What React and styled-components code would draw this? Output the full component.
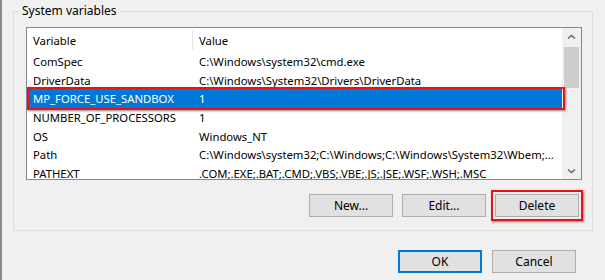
import React from "react";
import styled, { createGlobalStyle } from "styled-components";

const GlobalStyle = createGlobalStyle`
  html, body {
    margin: 0;
    padding: 0;
    background: #f0f0f0;
  }
  body {
    font-family: "Noto Sans", "Open Sans", sans-serif;
    font-size: 11.3px;
    color: #000;
  }
`;

const rows = [
  { name: "ComSpec", value: "C:\\Windows\\system32\\cmd.exe" },
  { name: "DriverData", value: "C:\\Windows\\System32\\Drivers\\DriverData" },
  { name: "MP_FORCE_USE_SANDBOX", value: "1", selected: true },
  { name: "NUMBER_OF_PROCESSORS", value: "1" },
  { name: "OS", value: "Windows_NT" },
  {
    name: "Path",
    value: "C:\\Windows\\system32;C:\\Windows;C:\\Windows\\System32\\Wbem;...",
  },
  { name: "PATHEXT", value: ".COM;.EXE;.BAT;.CMD;.VBS;.VBE;.JS;.JSE;.WSF;.WSH;.MSC" },
];

const Chevron = ({ down }) => (
  <svg width="9" height="6" viewBox="0 0 9 6">
    <path
      d={down ? "M1 1.5 L4.5 4.5 L8 1.5" : "M1 4.5 L4.5 1.5 L8 4.5"}
      fill="none"
      stroke="#606060"
      strokeWidth="1.4"
    />
  </svg>
);

const App = () => {
  return (
    <>
      <GlobalStyle />
      <Window>
        <Group>
          <Legend>System variables</Legend>
          <GroupBody>
            <ListBox>
              <Table>
                <Header>
                  <NameCell>Variable</NameCell>
                  <ValueCell $divider>Value</ValueCell>
                </Header>
                {rows.map((row) => (
                  <Row key={row.name} $selected={row.selected}>
                    <NameCell>{row.name}</NameCell>
                    <ValueCell>{row.value}</ValueCell>
                  </Row>
                ))}
              </Table>
              <ScrollBar>
                <Arrow>
                  <Chevron />
                </Arrow>
                <Track>
                  <Thumb />
                </Track>
                <Arrow>
                  <Chevron down />
                </Arrow>
              </ScrollBar>
            </ListBox>
            <ButtonRow>
              <Button>New...</Button>
              <Button>Edit...</Button>
              <Button $marked>Delete</Button>
            </ButtonRow>
          </GroupBody>
        </Group>
        <Footer>
          <Button $default>OK</Button>
          <Button>Cancel</Button>
        </Footer>
      </Window>
    </>
  );
};

const Window = styled.div`
  width: 603px;
  height: 280px;
  border-left: 2px solid #8a8a8a;
  display: flex;
  flex-direction: column;
  overflow: hidden;
`;

const Group = styled.section`
  margin: 11px 0 0 11px;
  width: 580px;
  height: 220px;
  box-sizing: border-box;
  border: 1px solid #dcdcdc;
  display: flex;
  flex-direction: column;
`;

const Legend = styled.div`
  align-self: flex-start;
  margin: -9px 0 0 5px;
  padding: 0 3px;
  line-height: 16px;
  font-size: 12px;
  background: #f0f0f0;
`;

const GroupBody = styled.div`
  padding: 8px 10px 13px 12px;
  display: flex;
  flex-direction: column;
`;

const ListBox = styled.div`
  height: 153px;
  box-sizing: border-box;
  border: 1px solid #828790;
  background: #fff;
  display: flex;
  overflow: hidden;
`;

const Table = styled.div`
  flex: 1;
  min-width: 0;
  display: flex;
  flex-direction: column;
`;

const Header = styled.div`
  height: 24px;
  flex: none;
  display: flex;
  align-items: center;
`;

const Row = styled.div`
  height: 18.7px;
  flex: none;
  display: flex;
  align-items: center;
  position: relative;
  background: ${({ $selected }) => ($selected ? "#0078d7" : "transparent")};
  color: ${({ $selected }) => ($selected ? "#fff" : "#000")};

  ${({ $selected }) =>
    $selected &&
    `
    &::after {
      content: "";
      position: absolute;
      left: 0;
      right: -3px;
      top: -2px;
      bottom: -2px;
      border: 2px solid #e8101a;
      box-shadow: 1px 1px 2px rgba(0, 0, 0, 0.45);
      pointer-events: none;
    }
  `}
`;

const NameCell = styled.div`
  width: 165px;
  box-sizing: border-box;
  flex: none;
  padding-left: 6px;
  white-space: nowrap;
`;

const ValueCell = styled.div`
  flex: 1;
  min-width: 0;
  align-self: stretch;
  display: flex;
  align-items: center;
  padding-left: 6px;
  white-space: nowrap;
  overflow: hidden;
  border-left: 1px solid ${({ $divider }) => ($divider ? "#e5e5e5" : "transparent")};
  margin: ${({ $divider }) => ($divider ? "2px 0" : "0")};
`;

const ScrollBar = styled.div`
  width: 19px;
  flex: none;
  background: #f0f0f0;
  display: flex;
  flex-direction: column;
`;

const Arrow = styled.div`
  height: 17px;
  flex: none;
  display: flex;
  align-items: center;
  justify-content: center;
`;

const Track = styled.div`
  flex: 1;
  padding: 2px 2px 0 2px;
`;

const Thumb = styled.div`
  height: 41px;
  background: #cdcdcd;
`;

const ButtonRow = styled.div`
  display: flex;
  justify-content: flex-end;
  gap: 9px;
  margin-top: 14px;
  margin-right: 3px;
`;

const Button = styled.button`
  width: 84px;
  height: 23px;
  box-sizing: border-box;
  font-family: inherit;
  font-size: 12px;
  color: #000;
  background: #e1e1e1;
  border: ${({ $default }) => ($default ? "2px solid #0078d7" : "1px solid #adadad")};
  padding: 0;
  position: relative;

  ${({ $marked }) =>
    $marked &&
    `
    &::after {
      content: "";
      position: absolute;
      inset: -5px;
      border: 2px solid #e8101a;
      box-shadow: 1px 1px 2px rgba(0, 0, 0, 0.45);
    }
  `}
`;

const Footer = styled.div`
  display: flex;
  justify-content: flex-end;
  gap: 10px;
  margin-top: 19px;
  margin-right: 29px;
`;

export default App;
